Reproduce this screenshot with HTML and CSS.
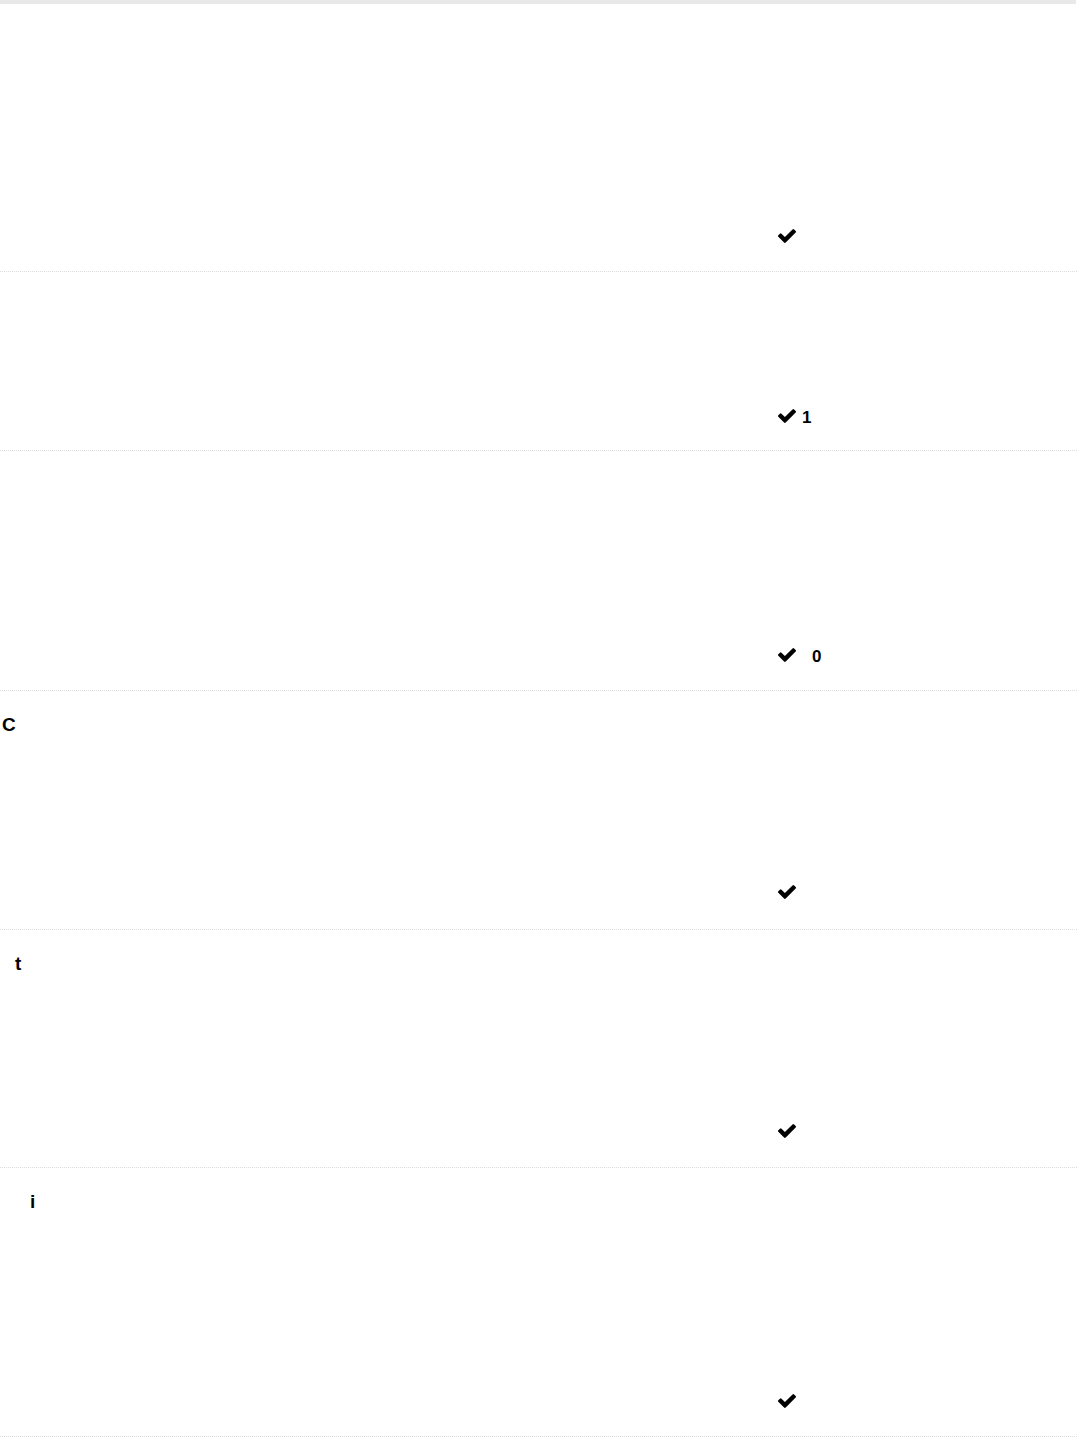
FILE: index.html
```html
<!DOCTYPE html>
<html>
<head>
<meta charset="utf-8">
<link rel="stylesheet" href="styles.css">
</head>
<body>
<div class="topbar"></div>
<div class="list">
  <div class="row r1">
    <div class="label"></div>
    <div class="status"><svg class="check" viewBox="121 334 1550 1188"><path d="M1671 566q0 40-28 68l-724 724-136 136q-28 28-68 28t-68-28l-136-136-362-362q-28-28-28-68t28-68l136-136q28-28 68-28t68 28l294 295 656-657q28-28 68-28t68 28l136 136q28 28 28 68z"/></svg></div>
  </div>
  <div class="row r2">
    <div class="label"></div>
    <div class="status"><svg class="check" viewBox="121 334 1550 1188"><path d="M1671 566q0 40-28 68l-724 724-136 136q-28 28-68 28t-68-28l-136-136-362-362q-28-28-28-68t28-68l136-136q28-28 68-28t68 28l294 295 656-657q28-28 68-28t68 28l136 136q28 28 28 68z"/></svg><span class="count c1">1</span></div>
  </div>
  <div class="row r3">
    <div class="label"></div>
    <div class="status"><svg class="check" viewBox="121 334 1550 1188"><path d="M1671 566q0 40-28 68l-724 724-136 136q-28 28-68 28t-68-28l-136-136-362-362q-28-28-28-68t28-68l136-136q28-28 68-28t68 28l294 295 656-657q28-28 68-28t68 28l136 136q28 28 28 68z"/></svg><span class="count c0">0</span></div>
  </div>
  <div class="row r4">
    <div class="label l0">C</div>
    <div class="status"><svg class="check" viewBox="121 334 1550 1188"><path d="M1671 566q0 40-28 68l-724 724-136 136q-28 28-68 28t-68-28l-136-136-362-362q-28-28-28-68t28-68l136-136q28-28 68-28t68 28l294 295 656-657q28-28 68-28t68 28l136 136q28 28 28 68z"/></svg></div>
  </div>
  <div class="row r5">
    <div class="label l1">t</div>
    <div class="status"><svg class="check" viewBox="121 334 1550 1188"><path d="M1671 566q0 40-28 68l-724 724-136 136q-28 28-68 28t-68-28l-136-136-362-362q-28-28-28-68t28-68l136-136q28-28 68-28t68 28l294 295 656-657q28-28 68-28t68 28l136 136q28 28 28 68z"/></svg></div>
  </div>
  <div class="row r6">
    <div class="label l2">i</div>
    <div class="status"><svg class="check" viewBox="121 334 1550 1188"><path d="M1671 566q0 40-28 68l-724 724-136 136q-28 28-68 28t-68-28l-136-136-362-362q-28-28-28-68t28-68l136-136q28-28 68-28t68 28l294 295 656-657q28-28 68-28t68 28l136 136q28 28 28 68z"/></svg></div>
  </div>
</div>
</body>
</html>
```

FILE: styles.css
```css
html, body {
  margin: 0;
  padding: 0;
  background: #ffffff;
}
body {
  font-family: "Liberation Sans", Arial, sans-serif;
  font-weight: bold;
  color: #000;
  width: 1077px;
}
.topbar {
  height: 4px;
  width: 1076px;
  background: #e8e8e8;
}
.list {
  display: flex;
  flex-direction: column;
}
.row {
  display: flex;
  justify-content: space-between;
  border-bottom: 1px dotted #dcdcdc;
  box-sizing: border-box;
}
.r1 { height: 268px; }
.r2 { height: 179px; }
.r3 { height: 240px; }
.r4 { height: 239px; }
.r5 { height: 238px; }
.r6 { height: 269px; }
.label {
  font-size: 19px;
  line-height: 20px;
  padding-top: 24px;
}
.l0 { padding-left: 2px; }
.l1 { padding-left: 15px; }
.l2 { padding-left: 30px; }
.status {
  width: 299px;
  display: flex;
  align-items: flex-end;
  padding-bottom: 28px;
  box-sizing: border-box;
}
.r2 .status { padding-bottom: 27px; }
.r4 .status { padding-bottom: 30px; }
.r5 .status { padding-bottom: 29px; }
.check {
  width: 18px;
  height: 14px;
  fill: #000;
  display: block;
}
.count {
  font-size: 17px;
  line-height: 13px;
  display: block;
  position: relative;
  top: 1px;
}
.c1 { margin-left: 6px; }
.c0 { margin-left: 16px; }
```
